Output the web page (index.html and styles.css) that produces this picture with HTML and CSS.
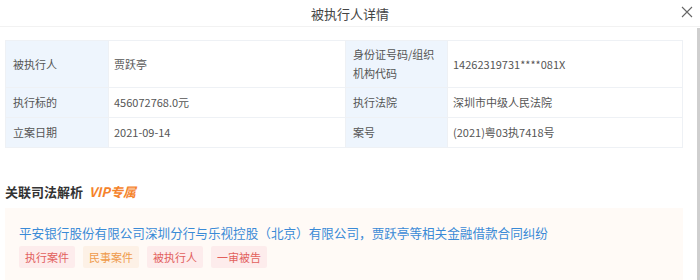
FILE: index.html
```html
<!DOCTYPE html>
<html lang="zh-CN">
<head>
  <meta charset="UTF-8" />
  <meta name="viewport" content="width=device-width, initial-scale=1.0" />
  <title>被执行人详情</title>
  <link rel="stylesheet" href="styles.css">
</head>
<body>
  <div class="header">
    <span class="title">被执行人详情</span>
    <svg class="close" width="12" height="12" viewBox="0 0 12 12">
      <path d="M1 1L11 11M11 1L1 11" stroke="#666" stroke-width="1.1" fill="none"/>
    </svg>
  </div>
  <div class="body">
    <div class="content">
      <table class="info">
        <colgroup>
          <col class="c-label"><col class="c-value"><col class="c-label2"><col>
        </colgroup>
        <tr class="tall">
          <td class="label">被执行人</td>
          <td class="value">贾跃亭</td>
          <td class="label">身份证号码/组织<br>机构代码</td>
          <td class="value">14262319731****081X</td>
        </tr>
        <tr>
          <td class="label">执行标的</td>
          <td class="value">456072768.0元</td>
          <td class="label">执行法院</td>
          <td class="value">深圳市中级人民法院</td>
        </tr>
        <tr>
          <td class="label">立案日期</td>
          <td class="value">2021-09-14</td>
          <td class="label">案号</td>
          <td class="value">(2021)粤03执7418号</td>
        </tr>
      </table>

      <h3 class="section">关联司法解析 <span class="vip">VIP专属</span></h3>

      <div class="case">
        <a class="case-link">平安银行股份有限公司深圳分行与乐视控股（北京）有限公司，贾跃亭等相关金融借款合同纠纷</a>
        <div class="tags">
          <span class="tag red">执行案件</span>
          <span class="tag orange">民事案件</span>
          <span class="tag red">被执行人</span>
          <span class="tag red">一审被告</span>
        </div>
      </div>
    </div>
    <div class="scrollbar"></div>
  </div>
</body>
</html>
```

FILE: styles.css
```css
body {
  margin: 0;
  padding: 0;
  font-family: "Noto Sans CJK SC", "Noto Sans", sans-serif;
  background: #fff;
  color: #555;
  overflow: hidden;
}
.header {
  height: 26px;
  border-bottom: 1px solid #f2f2f2;
  display: flex;
  align-items: center;
  justify-content: center;
  position: relative;
}
.title {
  font-size: 13px;
  color: #444;
}
.close {
  position: absolute;
  right: 7px;
  top: 6px;
}
.body {
  display: flex;
}
.content {
  flex: 1;
  padding: 13px 14px 0 5px;
}
.scrollbar {
  width: 3px;
  margin-top: 1px;
  height: 260px;
  background: #cfcfcf;
}
.info {
  width: 678px;
  border-collapse: collapse;
  table-layout: fixed;
  font-size: 11px;
}
.c-label { width: 103px; }
.c-value { width: 237px; }
.c-label2 { width: 102px; }
.info td {
  height: 29px;
  border: 1px solid #eef1f5;
  line-height: 19px;
  padding: 0 5px;
  color: #555;
}
.info tr.tall td {
  height: 46px;
}
.info td.label {
  background: #eef5fd;
  padding-left: 7px;
}
.section {
  margin: 35px 0 0;
  font-size: 13px;
  font-weight: bold;
  color: #333;
  line-height: 18px;
}
.vip {
  color: #f5832b;
  font-style: italic;
  margin-left: 3px;
}
.case {
  margin-top: 7px;
  background: #fffaf6;
  padding: 16px 14px 20px;
}
.case-link {
  display: block;
  font-size: 12.6px;
  line-height: 18px;
  color: #3a8ad6;
}
.tags {
  display: flex;
  gap: 8px;
  margin-top: 4px;
}
.tag {
  font-size: 11px;
  line-height: 22px;
  padding: 0 6px;
  border-radius: 2px;
}
.tag.red {
  background: #fdecec;
  color: #e2605c;
}
.tag.orange {
  background: #fdf1e6;
  color: #ef9a4a;
}
```
